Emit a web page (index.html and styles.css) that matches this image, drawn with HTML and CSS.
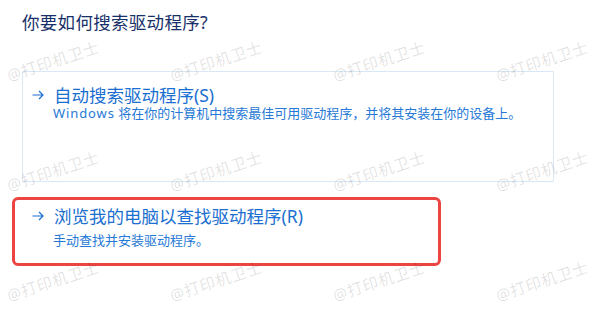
FILE: index.html
```html
<!DOCTYPE html>
<html lang="zh-CN">
<head>
<meta charset="utf-8">
<link rel="stylesheet" href="styles.css">
</head>
<body>
<div class="page">
  <h1 class="title">你要如何搜索驱动程序?</h1>
  <div class="card">
    <div class="option">
      <svg class="arrow" viewBox="0 0 12 10" width="12" height="10"><path d="M0.5 5H11M7 1l4 4-4 4" fill="none" stroke="#1a6fd0" stroke-width="1.2"/></svg>
      <div class="opt-title">自动搜索驱动程序(S)</div>
      <div class="opt-desc"><span class="latin">Windows</span> 将在你的计算机中搜索最佳可用驱动程序，并将其安装在你的设备上。</div>
    </div>
  </div>
  <div class="card highlight">
    <div class="option second">
      <svg class="arrow" viewBox="0 0 12 10" width="12" height="10"><path d="M0.5 5H11M7 1l4 4-4 4" fill="none" stroke="#1a6fd0" stroke-width="1.2"/></svg>
      <div class="opt-title">浏览我的电脑以查找驱动程序(R)</div>
      <div class="opt-desc">手动查找并安装驱动程序。</div>
    </div>
  </div>
  <div class="watermarks" aria-hidden="true">
    <span>@打印机卫士</span><span>@打印机卫士</span><span>@打印机卫士</span><span>@打印机卫士</span>
    <span>@打印机卫士</span><span>@打印机卫士</span><span>@打印机卫士</span><span>@打印机卫士</span>
    <span>@打印机卫士</span><span>@打印机卫士</span><span>@打印机卫士</span><span>@打印机卫士</span>
  </div>
</div>
</body>
</html>
```
FILE: styles.css
```css
* { box-sizing: border-box; }
html, body {
  margin: 0;
  padding: 0;
  background: #ffffff;
  width: 600px;
  height: 320px;
  overflow: hidden;
}
body {
  font-family: "Noto Sans", "Noto Sans CJK SC", sans-serif;
}
.page {
  position: relative;
  width: 600px;
  height: 320px;
  overflow: hidden;
  padding-top: 11px;
}
.title {
  margin: 0 0 0 22px;
  font-size: 17.5px;
  font-weight: 400;
  line-height: 22px;
  color: #17306a;
  letter-spacing: 0.3px;
}
.card {
  margin: 38px 0 0 22px;
  width: 532px;
  height: 111px;
  border: 1px solid #d9e8f7;
  border-radius: 1px;
  padding: 13px 0 0 9px;
}
.card.highlight {
  margin: 15px 0 0 12px;
  width: 429px;
  height: 69px;
  border: 3px solid #ec4541;
  border-radius: 6px;
  padding: 6px 0 0 17px;
}
.option {
  display: grid;
  grid-template-columns: 21px 1fr;
  align-items: center;
}
.arrow {
  grid-row: 1;
  grid-column: 1;
  display: block;
}
.opt-title {
  grid-row: 1;
  grid-column: 2;
  font-size: 17.5px;
  line-height: 20px;
  color: #1a6fd0;
  margin-left: 1px;
}
.opt-desc {
  grid-row: 2;
  grid-column: 2;
  font-size: 13px;
  line-height: 16px;
  color: #2679d6;
}
.latin {
  letter-spacing: 0.9px;
}
.second .opt-desc {
  margin-top: 6px;
}
.watermarks {
  position: absolute;
  left: -28px;
  top: 6px;
  display: grid;
  grid-template-columns: repeat(4, 163px);
  grid-template-rows: repeat(3, 110px);
  place-items: center;
  pointer-events: none;
}
.watermarks span {
  display: block;
  transform: rotate(-18deg);
  font-size: 15.5px;
  line-height: 18px;
  color: rgba(0, 0, 0, 0.12);
  white-space: nowrap;
  letter-spacing: 0.8px;
}
```
